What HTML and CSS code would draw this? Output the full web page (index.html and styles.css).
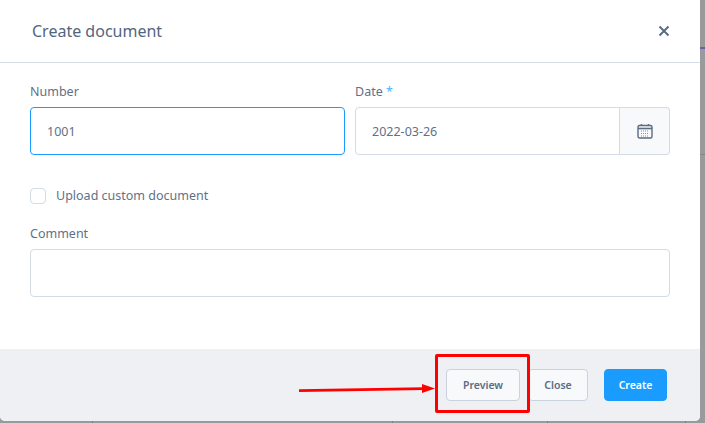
FILE: index.html
```html
<!DOCTYPE html>
<html lang="en">
<head>
  <meta charset="UTF-8" />
  <title>Create document</title>
  <link rel="stylesheet" href="styles.css">
</head>
<body>
  <div class="sidebar-line"></div>
  <div class="sidebar-rule"></div>

  <div class="modal">
    <header class="modal-header">
      <h2>Create document</h2>
      <svg class="close-icon" width="12" height="12" viewBox="0 0 12 12" aria-label="Close">
        <path d="M1.5 1.5l9 9M10.5 1.5l-9 9" />
      </svg>
    </header>

    <div class="modal-body">
      <div class="form-row">
        <div class="field">
          <label>Number</label>
          <div class="input input-focus">1001</div>
        </div>
        <div class="field">
          <label>Date <span class="required">*</span></label>
          <div class="input-group">
            <div class="input input-date">2022-03-26</div>
            <div class="addon">
              <svg width="16" height="16" viewBox="0 0 16 16">
                <rect x="1" y="2.5" width="14" height="12.5" rx="1.5" fill="none" stroke="#5a6d84" stroke-width="1.4" />
                <path d="M1 5.5h14" stroke="#5a6d84" stroke-width="1.6" />
                <path d="M4.5 1v2M11.5 1v2" stroke="#5a6d84" stroke-width="1.4" />
                <path d="M4 8h8M4 10.5h8M4 13h8" stroke="#8795a6" stroke-width="1" stroke-dasharray="1 1" />
              </svg>
            </div>
          </div>
        </div>
      </div>

      <label class="check-row">
        <span class="checkbox"></span>
        Upload custom document
      </label>

      <div class="field">
        <label>Comment</label>
        <div class="input"></div>
      </div>
    </div>

    <footer class="modal-footer">
      <button class="btn btn-preview">Preview</button>
      <button class="btn btn-close">Close</button>
      <button class="btn btn-primary">Create</button>
    </footer>

    <!-- Red annotation drawn on top of the screenshot -->
    <div class="highlight-box"></div>
    <svg class="arrow" width="140" height="12" viewBox="0 0 140 12">
      <path d="M0 7.6L125 5.6" stroke="#f00" stroke-width="2.6" />
      <path d="M123 1L136 5.5L123 10z" fill="#f00" />
    </svg>
  </div>

  <div class="page-behind">
    <span class="cell cell-date">December 2021-10-07</span>
    <span class="cell cell-num">1000</span>
    <span class="cell cell-type">Invoice</span>
    <span class="cell cell-end"></span>
  </div>
</body>
</html>
```

FILE: styles.css
```css
html, body {
  height: 100%;
}

body {
  margin: 0;
  width: 705px;
  height: 423px;
  overflow: hidden;
  position: relative;
  background: #999a9c;
  font-family: "Noto Sans", "Open Sans", sans-serif;
  color: #5a6d84;
}

.sidebar-line {
  position: absolute;
  top: 47px;
  right: 0;
  width: 5px;
  height: 2px;
  background: #6a5fa8;
}

.sidebar-rule {
  position: absolute;
  top: 154px;
  right: 0;
  width: 5px;
  height: 1px;
  background: #85868a;
}

.modal {
  position: relative;
  width: 700px;
  height: 421px;
  display: flex;
  flex-direction: column;
  background: #fff;
  border-radius: 0 0 5px 5px;
}

.modal-header {
  height: 63px;
  box-sizing: border-box;
  flex: none;
  display: flex;
  align-items: center;
  justify-content: space-between;
  padding: 0 30px 0 32px;
  border-bottom: 1px solid #d3dbe4;
}

.modal-header h2 {
  margin: 0;
  font-size: 16px;
  font-weight: 400;
  color: #53657e;
}

.close-icon path {
  fill: none;
  stroke: #5a6d84;
  stroke-width: 2;
}

.modal-body {
  flex: 1;
  padding: 20px 30px 0;
}

.form-row {
  display: grid;
  grid-template-columns: 315px 315px;
  gap: 10px;
}

label {
  display: block;
  font-size: 12.5px;
  line-height: 18px;
  color: #5f7187;
}

.field label {
  margin-bottom: 6px;
}

.required {
  color: #4db2ff;
}

.input {
  height: 48px;
  box-sizing: border-box;
  padding: 0 16px;
  display: flex;
  align-items: center;
  font-size: 12.5px;
  color: #5f7187;
  border: 1px solid #d3dbe4;
  border-radius: 4px;
  background: #fff;
}

.input-focus {
  border-color: #1a9cff;
}

.input-group {
  display: flex;
}

.input-date {
  flex: 1;
  border-radius: 4px 0 0 4px;
}

.addon {
  width: 50px;
  box-sizing: border-box;
  display: flex;
  align-items: center;
  justify-content: center;
  background: #f7f9fb;
  border: 1px solid #d3dbe4;
  border-left: 0;
  border-radius: 0 4px 4px 0;
}

.check-row {
  display: flex;
  align-items: center;
  gap: 10px;
  margin: 32px 0 20px;
}

.checkbox {
  width: 16px;
  height: 16px;
  box-sizing: border-box;
  border: 1px solid #d3dbe4;
  border-radius: 4px;
  background: #fff;
}

.modal-footer {
  height: 72px;
  flex: none;
  box-sizing: border-box;
  display: flex;
  justify-content: flex-end;
  align-items: flex-start;
  padding: 20px 33px 0 0;
  background: #eff0f4;
  border-radius: 0 0 5px 5px;
}

.btn {
  height: 32px;
  box-sizing: border-box;
  padding: 0;
  font-family: inherit;
  font-size: 10.5px;
  font-weight: 600;
  color: #5a6d84;
  border: 1px solid #c9d2dd;
  border-radius: 4px;
  background: #f7f9fb;
}

.btn-preview {
  width: 74px;
  margin-right: 8px;
}

.btn-close {
  width: 60px;
  margin-right: 16px;
}

.btn-primary {
  width: 63px;
  color: #fff;
  border-color: #1a9cff;
  background: #1a9cff;
}

.highlight-box {
  position: absolute;
  left: 435px;
  top: 354px;
  width: 95px;
  height: 59px;
  box-sizing: border-box;
  border: 3px solid #f00;
  border-radius: 2px;
}

.arrow {
  position: absolute;
  left: 299px;
  top: 383px;
}

.page-behind {
  display: flex;
  height: 14px;
  padding-left: 92px;
  font-family: "Liberation Sans", sans-serif;
  font-size: 13px;
  line-height: 14px;
  color: #2c3a55;
}

.cell {
  box-sizing: border-box;
  flex: none;
  padding-left: 23px;
  border-left: 1px solid #7d7e80;
  white-space: nowrap;
}

.cell-date {
  width: 300px;
}

.cell-num {
  width: 155px;
}

.cell-type {
  width: 138px;
}
```
